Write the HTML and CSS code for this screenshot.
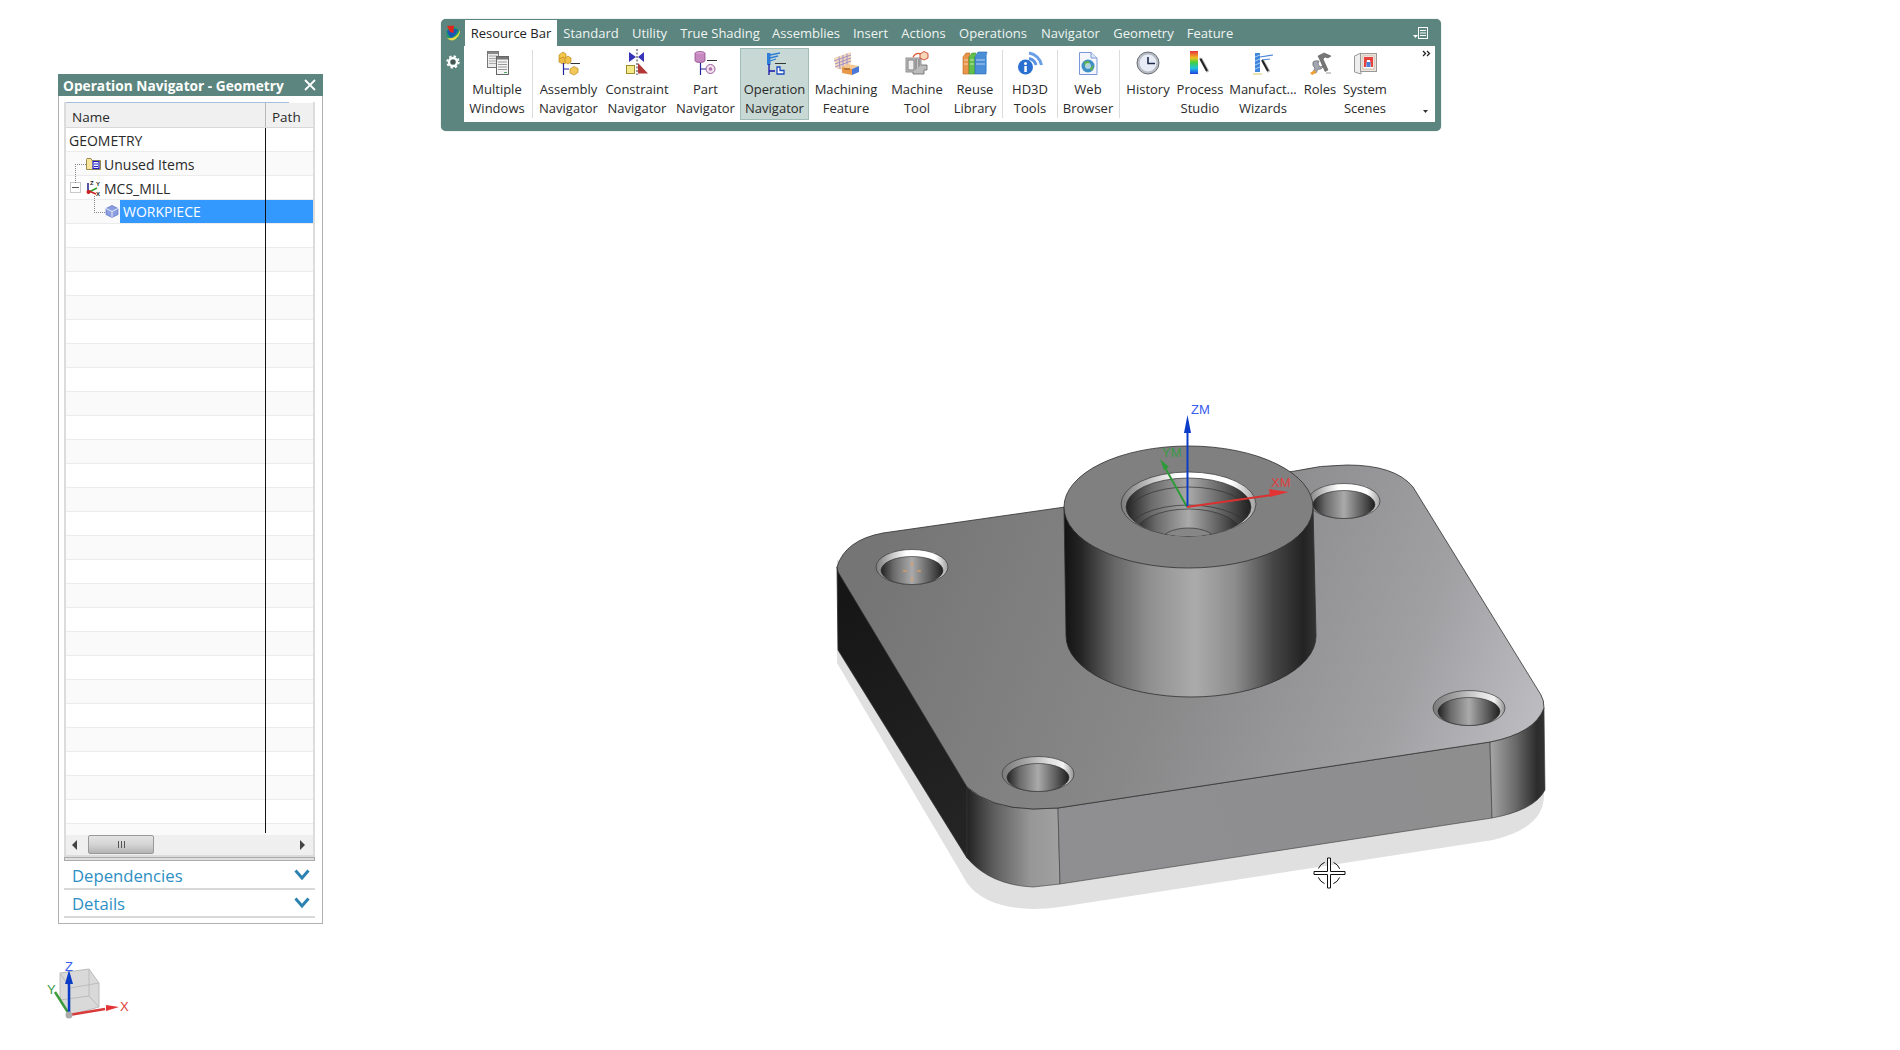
FILE: index.html
```html
<!DOCTYPE html>
<html lang="en">
<head>
<meta charset="utf-8">
<title>Operation Navigator</title>
<link rel="stylesheet" href="styles.css">
</head>
<body>
<main class="canvas">

<svg class="model" viewBox="820 390 760 540" width="760" height="540">
  <defs>
    <linearGradient id="topFace" gradientUnits="userSpaceOnUse" x1="900" y1="500" x2="1530" y2="730">
      <stop offset="0" stop-color="#757575"/><stop offset=".45" stop-color="#888889"/><stop offset=".8" stop-color="#a0a0a3"/><stop offset="1" stop-color="#bcbcc0"/>
    </linearGradient>
    <linearGradient id="frontFace" gradientUnits="userSpaceOnUse" x1="1060" y1="880" x2="1490" y2="745">
      <stop offset="0" stop-color="#8f8f92"/><stop offset="1" stop-color="#8e8e8f"/>
    </linearGradient>
    <linearGradient id="leftFace" gradientUnits="userSpaceOnUse" x1="840" y1="600" x2="960" y2="830">
      <stop offset="0" stop-color="#161616"/><stop offset="1" stop-color="#242424"/>
    </linearGradient>
    <linearGradient id="cornerFL" gradientUnits="userSpaceOnUse" x1="967" y1="0" x2="1058" y2="0">
      <stop offset="0" stop-color="#222"/><stop offset=".3" stop-color="#5e5e5e"/><stop offset=".7" stop-color="#979797"/><stop offset="1" stop-color="#a0a0a0"/>
    </linearGradient>
    <linearGradient id="cornerFR" gradientUnits="userSpaceOnUse" x1="1491" y1="0" x2="1545" y2="0">
      <stop offset="0" stop-color="#a4a4a4"/><stop offset=".45" stop-color="#6a6a6a"/><stop offset=".85" stop-color="#2c2c2c"/><stop offset="1" stop-color="#333"/>
    </linearGradient>
    <linearGradient id="bossWall" gradientUnits="userSpaceOnUse" x1="1064" y1="0" x2="1316" y2="0">
      <stop offset="0" stop-color="#121212"/><stop offset=".07" stop-color="#262626"/><stop offset=".2" stop-color="#666"/><stop offset=".34" stop-color="#909090"/><stop offset=".52" stop-color="#ababab"/><stop offset=".68" stop-color="#8c8c8c"/><stop offset=".83" stop-color="#464646"/><stop offset=".95" stop-color="#232323"/><stop offset="1" stop-color="#343434"/>
    </linearGradient>
    <linearGradient id="bore">
      <stop offset="0" stop-color="#222"/><stop offset=".2" stop-color="#6a6a6a"/><stop offset=".5" stop-color="#aaa"/><stop offset=".8" stop-color="#5a5a5a"/><stop offset="1" stop-color="#1e1e1e"/>
    </linearGradient>
    <linearGradient id="rim">
      <stop offset="0" stop-color="#7c7c7c"/><stop offset=".25" stop-color="#cfcfcf"/><stop offset=".42" stop-color="#fff"/><stop offset=".82" stop-color="#fff"/><stop offset="1" stop-color="#a0a0a0"/>
    </linearGradient>
    <linearGradient id="rimDull">
      <stop offset="0" stop-color="#7a7a7a"/><stop offset=".35" stop-color="#a8a8a8"/><stop offset=".65" stop-color="#dedede"/><stop offset=".85" stop-color="#f2f2f2"/><stop offset="1" stop-color="#909090"/>
    </linearGradient>
    <clipPath id="boreClip"><ellipse cx="1188.5" cy="507" rx="62.5" ry="29"/></clipPath>
    <g id="hole">
      <ellipse cx="0" cy="0" rx="36" ry="17.5" fill="url(#rim)" stroke="#3a3a3a" stroke-width=".7"/>
      <ellipse cx="0" cy="3.5" rx="31" ry="14" fill="url(#bore)" stroke="#2a2a2a" stroke-width=".6"/>
    </g>
    <g id="holeDull">
      <ellipse cx="0" cy="0" rx="36" ry="17.5" fill="url(#rimDull)" stroke="#3a3a3a" stroke-width=".7"/>
      <ellipse cx="0" cy="3.5" rx="31" ry="14" fill="url(#bore)" stroke="#2a2a2a" stroke-width=".6"/>
    </g>
  </defs>

  <path class="shadow" d="M837,560 L837,663 L967,883 Q985,908 1033,909 Q1047,909 1060,907 L1493,840 Q1544,828 1544,795 L1544,700 Z"/>
  <path class="edge" fill="url(#leftFace)" d="M837,567 L838,650 L967,858 L967,787 Z"/>
  <path class="edge-thin" fill="url(#cornerFL)" d="M967,787 Q990,808 1033,809 L1058,808 L1060,884 L1033,887 Q990,885 967,858 Z"/>
  <path class="edge-thin" fill="url(#frontFace)" d="M1058,808 L1490,742 L1492,818 L1060,884 Z"/>
  <path class="edge-thin" fill="url(#cornerFR)" d="M1490,742 Q1535,733 1544,708 L1545,790 Q1535,810 1492,818 Z"/>
  <path class="edge" fill="url(#topFace)" d="M1065,507 L883,533 Q845,540 837,567 L838,572 L967,787 Q990,808 1033,809 L1058,808 L1490,742 Q1535,733 1544,708 Q1544,700 1541,695 L1413,487 Q1395,465 1347,465 Q1320,465 1295,471 Z"/>

  <use href="#hole" x="912" y="567"/>
  <use href="#holeDull" x="1038" y="774"/>
  <use href="#hole" x="1344" y="501"/>
  <use href="#holeDull" x="1469" y="708"/>
  <path class="center-mark" d="M912,562V566M912,577V581M903,571H907M917,571H921"/>

  <path class="edge" fill="url(#bossWall)" d="M1064,507 L1066,636 A125,61 0 0 0 1316,636 L1313,507 Z"/>
  <ellipse class="edge" cx="1188.5" cy="507" rx="124.5" ry="61" fill="#808080"/>

  <ellipse cx="1188.5" cy="504" rx="67.5" ry="32" fill="url(#rim)" stroke="#333" stroke-width=".7"/>
  <ellipse cx="1188.5" cy="507" rx="62.5" ry="29" fill="url(#bore)" stroke="#333" stroke-width=".7"/>
  <g clip-path="url(#boreClip)">
    <ellipse class="bore-line" cx="1188.5" cy="515" rx="62" ry="28"/>
    <ellipse class="bore-line" cx="1188.5" cy="533" rx="62" ry="28"/>
    <ellipse cx="1188.5" cy="535" rx="54" ry="26" fill="url(#bore)" stroke="#333" stroke-width=".7"/>
    <ellipse cx="1188.5" cy="543" rx="29" ry="15" fill="#868686" stroke="#333" stroke-width=".7"/>
  </g>

  <g class="triad">
    <path class="axis-y" d="M1187,507 L1163,464"/>
    <path class="head-y" d="M1160,459 L1169,467 L1164,470 Z"/>
    <path class="axis-z" d="M1187.5,507 V432"/>
    <path class="head-z" d="M1187.5,415 L1191,433 H1184 Z"/>
    <path class="axis-x" d="M1187,507 L1272,495"/>
    <path class="head-x" d="M1289,492 L1269,489 L1270,497 Z"/>
    <text class="lbl lbl-z" x="1191" y="414">ZM</text>
    <text class="lbl lbl-y" x="1162" y="457">YM</text>
    <text class="lbl lbl-x" x="1271" y="487">XM</text>
  </g>

  <g class="cursor">
    <circle cx="1329" cy="873" r="11.5" fill="none" stroke="#111" stroke-width="1" stroke-dasharray="9 9" stroke-dashoffset="-4.5"/>
    <path d="M1314,871.5 H1327.5 V858 H1330.5 V871.5 H1345 V874.5 H1330.5 V888 H1327.5 V874.5 H1314 Z" fill="#fff" stroke="#111" stroke-width="1"/>
  </g>
</svg>

<svg class="triad-small" viewBox="40 960 100 70" width="100" height="70">
  <path d="M60,973 L89,969 L99,983 L99,1007 L70,1015 L60,1000 Z" fill="#d9d9d9" stroke="#bcbcbc"/>
  <path d="M60,973 L70,988 L99,983 M70,988 V1015 M60,1000 L89,996 L99,1007 M89,969 V996" fill="none" stroke="#bcbcbc"/>
  <path d="M69,1014 L55,992" stroke="#3c9c3c" stroke-width="2.5"/>
  <path d="M69,1015 L105,1009" stroke="#d83a3a" stroke-width="2.5"/>
  <path d="M119,1007 L106,1005 L106,1011 Z" fill="#e23434"/>
  <path d="M69,1012 V983" stroke="#0a3cc8" stroke-width="2.5"/>
  <path d="M69,970 L73,984 H65 Z" fill="#0a3cc8"/>
  <circle cx="69" cy="1015" r="3.5" fill="#aaa"/>
  <text class="lbl lbl-z" x="65" y="971">Z</text>
  <text class="lbl lbl-y" x="47" y="994">Y</text>
  <text class="lbl lbl-x" x="120" y="1011">X</text>
</svg>

<section class="ribbon">
  <aside class="rail">
    <svg class="logo" viewBox="0 0 16 16" width="16" height="16">
      <circle cx="8" cy="8.500" r="6.800" fill="#1f9a68"/>
      <path d="M2,6 Q8,2 13,5 Q11,10 6,13 Q3,10 2,6 Z" fill="#1a55b8"/>
      <path d="M2,1 L9,0.500 L8.500,8 L5,7 Z" fill="#e0261c"/>
      <path d="M2,13 Q11,15 15,5 Q15.500,12 8,15.500 Q4,15.500 2,13 Z" fill="#ecd84a"/>
    </svg>
    <svg class="gear" viewBox="0 0 14 14" width="14" height="14">
      <circle cx="7" cy="7" r="5.800" fill="none" stroke="#fff" stroke-width="1.800" stroke-dasharray="2.300 2.250"/>
      <circle cx="7" cy="7" r="4" fill="none" stroke="#fff" stroke-width="2.300"/>
      <circle cx="7" cy="7" r="2.300" fill="#48524f"/>
    </svg>
  </aside>
  <div class="ribbon-main">
    <nav class="tabs">
      <span class="tab active">Resource Bar</span>
      <span class="tab">Standard</span>
      <span class="tab">Utility</span>
      <span class="tab">True Shading</span>
      <span class="tab">Assemblies</span>
      <span class="tab">Insert</span>
      <span class="tab">Actions</span>
      <span class="tab">Operations</span>
      <span class="tab">Navigator</span>
      <span class="tab">Geometry</span>
      <span class="tab">Feature</span>
      <svg class="pin" viewBox="0 0 16 14" width="16" height="14">
        <path d="M0,9 H5 L2.500,12 Z" fill="#fff"/>
        <rect x="5.500" y="1.500" width="9" height="11" fill="#5b857e" stroke="#fff"/>
        <path d="M7,4.500H13M7,7H13M7,9.500H13" stroke="#fff"/>
      </svg>
    </nav>
    <div class="tools">
      <div class="tool">
        <svg class="ico" viewBox="0 0 28 28">
          <rect x="4.500" y="3.500" width="11" height="16" fill="#ececec" stroke="#777"/>
          <rect x="5" y="4" width="10" height="2" fill="#888"/>
          <path d="M6,8H14M6,10.500H14M6,13H14M6,15.500H14" stroke="#aaa"/>
          <rect x="13.500" y="8.500" width="12" height="18" fill="#f4f4f4" stroke="#666"/>
          <rect x="14" y="9" width="11" height="2.500" fill="#777"/>
          <path d="M15,14H24M15,16.500H24M15,19H24M15,21.500H24" stroke="#999"/>
          <path d="M21,24.500H24" stroke="#4aa860"/>
        </svg>
        <span class="label">Multiple<br>Windows</span>
      </div>
      <i class="sep"></i>
      <div class="tool">
        <svg class="ico" viewBox="0 0 28 28">
          <path d="M4,7 L8,4 L11,6 V11 L7,13 L4,11 Z" fill="#f4c64c" stroke="#b98a20" stroke-width=".7"/>
          <path d="M4,11 L8,9 L11,11 L11,15 L8,16 L4,14 Z" fill="#eebc44" stroke="#b98a20" stroke-width=".7"/>
          <path d="M10,10 L13,8 L16,10 V14 L13,16 L10,14 Z" fill="#f0c24c" stroke="#b98a20" stroke-width=".7"/>
          <path d="M15.500,15.500 H25" stroke="#333"/>
          <path d="M8.500,15 V27 M8.500,21 H14" stroke="#25259a" stroke-width="1.200"/>
          <path d="M15,21 L19,18.500 L23,20.500 V24.500 L19,27 L15,25 Z" fill="#f2c858" stroke="#b98a20" stroke-width=".7"/>
        </svg>
        <span class="label">Assembly<br>Navigator</span>
      </div>
      <div class="tool">
        <svg class="ico" viewBox="0 0 28 28">
          <path d="M6,4 L13,9 L6,14 Z M21,4 L15,9 L21,14 Z" fill="#3733b8"/>
          <path d="M14,1 V27" stroke="#333" stroke-dasharray="2 1.500"/>
          <rect x="3.500" y="17.500" width="8" height="8" fill="#f5ea8a" stroke="#a08c30"/>
          <path d="M15,15 L25,25.500 H15 Z" fill="#b23838"/>
        </svg>
        <span class="label">Constraint<br>Navigator</span>
      </div>
      <div class="tool">
        <svg class="ico" viewBox="0 0 28 28">
          <ellipse cx="8" cy="5.500" rx="5" ry="2" fill="#e0a8d8" stroke="#8a4a88" stroke-width=".8"/>
          <path d="M3,5.500 V12.500 A5,2 0 0 0 13,12.500 V5.500" fill="#c68ac0" stroke="#8a4a88" stroke-width=".8"/>
          <path d="M15,12.500 H25" stroke="#333"/>
          <path d="M8.500,15 V27 M8.500,21 H14" stroke="#25259a" stroke-width="1.200"/>
          <circle cx="18.500" cy="21" r="4.500" fill="#f2e2f0" stroke="#9a5a98"/>
          <circle cx="18.500" cy="21" r="1.800" fill="#b070a8"/>
        </svg>
        <span class="label">Part<br>Navigator</span>
      </div>
      <div class="tool current">
        <svg class="ico" viewBox="0 0 28 28">
          <rect x="6" y="5" width="3.500" height="12" fill="#2f7fd8"/>
          <path d="M9,7 L19,5 M9,10 L17,8 M9,13 L15,11" stroke="#2f7fd8" stroke-width="1.300"/>
          <path d="M14,15.500 H25" stroke="#333"/>
          <path d="M8,16 V27 M8,23 H14" stroke="#1515a8" stroke-width="1.300"/>
          <path d="M16,19 H19 V22.500 H23 V26 H16 Z" fill="#fff" stroke="#1a4ac0" stroke-width="1.300"/>
        </svg>
        <span class="label">Operation<br>Navigator</span>
      </div>
      <div class="tool">
        <svg class="ico" viewBox="0 0 28 28">
          <path d="M2,10 L19,4 V15 L10,22 L4,20 Z" fill="#f4d8b8"/>
          <path d="M2,13 L19,7 M3,16 L19,10 M3,19 L19,13 M7,8.500 L8,21 M11,7 L11,19 M15,5.500 L15,17" stroke="#9a8ac8" stroke-width=".9" fill="none"/>
          <path d="M10,19 L16,16 L27,18 L20,21 Z" fill="#f4c890"/>
          <path d="M10,19 L20,21 V27 L10,25 Z" fill="#e89848"/>
          <path d="M20,21 L27,18 V24 L20,27 Z" fill="#4a78d8"/>
          <path d="M12,21 H18" stroke="#a86828" stroke-width="1.500"/>
        </svg>
        <span class="label">Machining<br>Feature</span>
      </div>
      <div class="tool">
        <svg class="ico" viewBox="0 0 28 28">
          <rect x="3" y="10" width="15" height="14" fill="#c8c8c8" stroke="#777" stroke-width=".8"/>
          <rect x="5" y="12" width="6" height="10" fill="#eee" stroke="#666" stroke-width=".8"/>
          <path d="M13,11 V22 M16,11 V22" stroke="#666"/>
          <path d="M18,17 H24 V22 L21,22 L21,26 H10 V24" fill="#bbb" stroke="#666" stroke-width=".8"/>
          <path d="M10,9 Q13,4 18,6" fill="none" stroke="#e05830" stroke-width="1.300"/>
          <path d="M17,6 L21,3.500 L25,5.500 V10 L21,12 L17,10 Z" fill="#f5d8b8" stroke="#d0402a" stroke-width=".9"/>
        </svg>
        <span class="label">Machine<br>Tool</span>
      </div>
      <div class="tool">
        <svg class="ico" viewBox="0 0 28 28">
          <path d="M2,9 L5,5 H9 L8,9 V26 H2 Z" fill="#e8944a" stroke="#b86a20" stroke-width=".6"/>
          <path d="M8,9 L11,5 H15 L14,9 V26 H8 Z" fill="#62c04a" stroke="#3e9030" stroke-width=".6"/>
          <path d="M14,9 L17,4 H26 L25,9 V26 L20,26 H14 Z" fill="#4a8ed8" stroke="#2a68b0" stroke-width=".6"/>
          <path d="M25,9 L26,4 V22 L25,26 Z" fill="#8abcec"/>
          <path d="M3,12H7M9,12H13M15,12H24M15,16H24M9,16H13M3,16H7" stroke="#fff" stroke-opacity=".6"/>
        </svg>
        <span class="label">Reuse<br>Library</span>
      </div>
      <i class="sep"></i>
      <div class="tool">
        <svg class="ico" viewBox="0 0 28 28">
          <path d="M13,10.500 A9,9 0 0 1 20,17" fill="none" stroke="#5a92e4" stroke-width="2.800"/>
          <path d="M13,5 A15,15 0 0 1 25.500,17" fill="none" stroke="#6a9ee6" stroke-width="3"/>
          <circle cx="9.500" cy="19" r="7.500" fill="#2a70d0"/>
          <circle cx="9.500" cy="15.500" r="1.500" fill="#fff"/>
          <rect x="8.300" y="18" width="2.500" height="6" fill="#fff"/>
        </svg>
        <span class="label">HD3D<br>Tools</span>
      </div>
      <i class="sep"></i>
      <div class="tool">
        <svg class="ico" viewBox="0 0 28 28">
          <path d="M5.500,4.500 H17 L23,10 V26.500 H5.500 Z" fill="#f4f6fb" stroke="#7a98d8"/>
          <path d="M17,4.500 V10 H23" fill="#dfe6f6" stroke="#7a98d8"/>
          <circle cx="14" cy="18" r="6.500" fill="#3e8fc8"/>
          <path d="M10,14 Q13,12 16,14 L14,18 L11,19 Z M15,20 L20,17 L18,23 Z" fill="#5cae50"/>
          <circle cx="14" cy="18" r="3" fill="#d8ecf4" opacity=".7"/>
        </svg>
        <span class="label">Web<br>Browser</span>
      </div>
      <i class="sep"></i>
      <div class="tool">
        <svg class="ico" viewBox="0 0 28 28">
          <circle cx="14" cy="15" r="11" fill="#b8bcc4" stroke="#6a6e78"/>
          <circle cx="14" cy="15" r="8.500" fill="#e8ecf6"/>
          <path d="M14,9 V15.500 H21" fill="none" stroke="#1c2a4a" stroke-width="1.600"/>
        </svg>
        <span class="label">History</span>
      </div>
      <div class="tool">
        <svg class="ico" viewBox="0 0 28 28">
          <defs>
            <linearGradient id="spectrum" x1="0" y1="0" x2="0" y2="1">
              <stop offset="0" stop-color="#e8303a"/><stop offset=".3" stop-color="#f0c020"/><stop offset=".5" stop-color="#40d040"/><stop offset=".75" stop-color="#20c0e0"/><stop offset="1" stop-color="#2040e0"/>
            </linearGradient>
          </defs>
          <rect x="4" y="3" width="8" height="23" fill="url(#spectrum)"/>
          <path d="M15,11 L22,24" stroke="#bbb" stroke-width="3"/>
          <path d="M14,10 L21,23" stroke="#222" stroke-width="2"/>
          <path d="M13,8.500 L14.500,10.500" stroke="#eee" stroke-width="2"/>
        </svg>
        <span class="label">Process<br>Studio</span>
      </div>
      <div class="tool">
        <svg class="ico" viewBox="0 0 28 28">
          <rect x="6" y="5" width="5" height="19" fill="#3f86dc"/>
          <path d="M6,9 L11,7 M6,13 L11,11 M6,17 L11,15 M6,21 L11,19" stroke="#a8ccf0"/>
          <path d="M11,9 L24,7 M13,12 L21,11" stroke="#4a80d8" stroke-width="1.200"/>
          <path d="M14,13 L20,24" stroke="#bbb" stroke-width="3"/>
          <path d="M13,12 L19,23" stroke="#222" stroke-width="2"/>
          <path d="M4,26 H13" stroke="#e0d080" stroke-width="1.200"/>
        </svg>
        <span class="label">Manufact...<br>Wizards</span>
      </div>
      <div class="tool">
        <svg class="ico" viewBox="0 0 28 28">
          <path d="M12,8 L18,5 L25,8 L22,10 L19,9 L17,11 L22,22 L19,23.500 L14,12 Z" fill="#777" stroke="#444" stroke-width=".5"/>
          <path d="M7,14 Q6,18 9,20 L7,24 L10,25 L12,21 Q16,22 17,18 L14,19 L12,16 L13,13 Q9,12 7,14 Z" fill="#a2a6b0" stroke="#555" stroke-width=".6"/>
          <path d="M4,25 L9,22 L10,25 L6,27 Z" fill="#f0a030"/>
          <path d="M20,25 H25" stroke="#ccc" stroke-width="2"/>
        </svg>
        <span class="label">Roles</span>
      </div>
      <div class="tool">
        <svg class="ico" viewBox="0 0 28 28">
          <path d="M3.500,8 L10,5 V26 L3.500,24 Z" fill="#eee" stroke="#999"/>
          <rect x="9.500" y="5.500" width="16" height="18" fill="#e8e2da" stroke="#999"/>
          <rect x="12" y="8" width="11" height="13" fill="#fff" stroke="#c0a090" stroke-width=".6"/>
          <rect x="13" y="9" width="9" height="3" fill="#e8403a"/>
          <path d="M13,12 H16 L15,19 H13 Z M22,12 H19 L20,19 H22 Z" fill="#e8403a"/>
          <rect x="15.500" y="14" width="4" height="5" fill="#4a7ed8"/>
        </svg>
        <span class="label">System<br>Scenes</span>
      </div>
      <div class="overflow">
        <svg viewBox="0 0 9 7" width="9" height="7"><path d="M1,1 L3.500,3.500 L1,6 M5,1 L7.500,3.500 L5,6" fill="none" stroke="#222" stroke-width="1.300"/></svg>
        <svg class="more" viewBox="0 0 7 4" width="7" height="4"><path d="M1,0 H6 L3.500,3 Z" fill="#333"/></svg>
      </div>
    </div>
  </div>
</section>

<section class="navigator">
  <header class="nav-head">
    <span>Operation Navigator - Geometry</span>
    <svg viewBox="0 0 12 12" width="12" height="12"><path d="M1,1 L11,11 M11,1 L1,11" stroke="#fff" stroke-width="1.800"/></svg>
  </header>
  <div class="nav-body">
    <div class="list">
      <div class="strip"></div>
      <div class="list-head"><span class="col-name">Name</span><span class="col-path">Path</span></div>
      <div class="rows">
        <div class="col-line"></div>
        <div class="row plain">GEOMETRY</div>
        <div class="row branch">
          <i class="link link-a"></i>
          <svg class="tree-ico" viewBox="0 0 15 13"><path d="M.5,2.500 V12.500 H14.500 V3.500 H6 L5,1.500 H1 Z" fill="#f8e49a" stroke="#9a8a50"/><rect x="7" y="4.500" width="6" height="7" fill="#fff" stroke="#1a1ac8" stroke-width="1.200"/><path d="M8,7H12M8,9.500H12" stroke="#1a1ac8"/></svg>
          <span>Unused Items</span>
        </div>
        <div class="row mcs">
          <i class="expander"></i>
          <svg class="tree-ico tall" viewBox="0 0 15 16"><path d="M2,3 V11" stroke="#1a1a8a" stroke-width="1.500"/><path d="M3,12 L11,8" stroke="#2aa02a" stroke-width="1.500"/><path d="M3,11 L10,14" stroke="#c82020" stroke-width="1.500"/><circle cx="2.500" cy="12" r="2" fill="#c82020"/><text class="micro" x="4" y="5">Z</text><text class="micro" x="10" y="6">Y</text><text class="micro" x="10" y="16">X</text></svg>
          <span>MCS_MILL</span>
        </div>
        <div class="row leaf">
          <i class="link link-b"></i>
          <svg class="tree-ico cube" viewBox="0 0 14 13"><path d="M1,3.500 L7,.5 L13,3.500 V9.500 L7,12.500 L1,9.500 Z" fill="#8a9ee0" stroke="#5a70c0" stroke-width=".7"/><path d="M1,3.500 L7,6.500 L13,3.500 M7,6.500 V12.500" fill="none" stroke="#e8ecfa"/></svg>
          <span class="selected">WORKPIECE</span>
        </div>
        <div class="row"></div><div class="row"></div><div class="row"></div><div class="row"></div><div class="row"></div>
        <div class="row"></div><div class="row"></div><div class="row"></div><div class="row"></div><div class="row"></div>
        <div class="row"></div><div class="row"></div><div class="row"></div><div class="row"></div><div class="row"></div>
        <div class="row"></div><div class="row"></div><div class="row"></div><div class="row"></div><div class="row"></div>
        <div class="row"></div><div class="row"></div><div class="row"></div><div class="row"></div><div class="row"></div>
        <div class="row"></div>
      </div>
      <div class="hscroll">
        <svg class="arrow" viewBox="0 0 6 10" width="6" height="10"><path d="M5,0 V10 L0,5 Z" fill="#444"/></svg>
        <div class="thumb"><i></i><i></i><i></i></div>
        <svg class="arrow" viewBox="0 0 6 10" width="6" height="10"><path d="M1,0 V10 L6,5 Z" fill="#444"/></svg>
      </div>
    </div>
    <div class="split"></div>
    <div class="fold"><span>Dependencies</span><svg viewBox="0 0 16 12" width="16" height="12"><path d="M1.500,1.500 L8,9 L14.500,1.500" fill="none" stroke="#2c82b0" stroke-width="3"/></svg></div>
    <div class="fold"><span>Details</span><svg viewBox="0 0 16 12" width="16" height="12"><path d="M1.500,1.500 L8,9 L14.500,1.500" fill="none" stroke="#2c82b0" stroke-width="3"/></svg></div>
  </div>
</section>

</main>
</body>
</html>
```

FILE: styles.css
```css
* { box-sizing: border-box; }
html, body { margin: 0; height: 100%; background: #fff; }
body { overflow: hidden; font-family: "Open Sans", "Noto Sans", "Liberation Sans", sans-serif; font-size: 13px; color: #2a2a2a; }
.canvas { position: relative; width: 1900px; height: 1050px; }

/* 3D part on the free canvas */
.model { position: absolute; left: 820px; top: 390px; }
.shadow { fill: #e0e0e0; }
.edge { stroke: #2e2e2e; stroke-width: .8; }
.edge-thin { stroke: #3a3a3a; stroke-width: .6; }
.bore-line { fill: none; stroke: #333; stroke-width: .7; }
.center-mark { fill: none; stroke: #f0a050; stroke-width: 1; }
.axis-z { stroke: #0a3cc8; stroke-width: 2; }
.head-z { fill: #0a3cc8; }
.axis-y { stroke: #2f9a38; stroke-width: 2; }
.head-y { fill: #2f9a38; }
.axis-x { stroke: #d93030; stroke-width: 2; }
.head-x { fill: #e23434; }
.lbl { font-family: "Liberation Sans", sans-serif; font-size: 13px; }
.lbl-z { fill: #3a5cf0; }
.lbl-y { fill: #3a9a48; }
.lbl-x { fill: #e04040; }
.triad-small { position: absolute; left: 40px; top: 960px; }
.micro { font-family: "Liberation Sans", sans-serif; font-size: 6px; font-weight: bold; fill: #222; }

/* ribbon window */
.ribbon { position: absolute; left: 441px; top: 19px; width: 1000px; height: 112px; display: flex; background: #5b857e; border-radius: 5px; box-shadow: 0 0 1px #5b857e; }
.rail { width: 23px; display: flex; flex-direction: column; align-items: center; padding-top: 6px; gap: 14px; }
.ribbon-main { flex: 1; margin-right: 6px; display: flex; flex-direction: column; }
.tabs { height: 27px; display: grid; grid-template-columns: 92px 68px 49px 92px 80px 49px 57px 82px 73px 73px 60px 1fr; margin-left: 1px; align-items: stretch; }
.tab { display: flex; align-items: center; justify-content: center; color: #f0f4f3; margin-top: 1px; white-space: nowrap; padding-bottom: 1px; }
.tab.active { background: #fff; color: #222; }
.pin { justify-self: end; align-self: center; margin-right: 6px; }
.tools { height: 76px; background: #fff; padding-top: 2px; display: grid; grid-template-columns: 66px 4px 69px 68px 69px 69px 74px 68px 48px 6px 50px 4px 58px 4px 54px 50px 76px 38px 52px 1fr; }
.tool { height: 72px; display: flex; flex-direction: column; align-items: center; border: 1px solid transparent; }
.tool.current { background: #c8d8d4; border-color: #9fbdb6; }
.ico { width: 28px; height: 28px; flex: none; margin-top: -1px; }
.label { margin-top: 4px; line-height: 19px; text-align: center; white-space: nowrap; }
.sep { width: 1px; height: 68px; margin: 2px auto 0; background: #dcdcdc; }
.overflow { height: 72px; display: flex; flex-direction: column; align-items: flex-end; justify-content: space-between; padding: 2px 4px 6px 0; }
.more { margin-right: 2px; }

/* navigator window */
.navigator { position: absolute; left: 58px; top: 74px; width: 265px; height: 850px; border: 1px solid #b0b0b0; border-top: 0; background: #fff; }
.nav-head { height: 22px; margin: 0 -1px; background: #5b857e; color: #fff; font-weight: 700; font-size: 13.700px; display: flex; align-items: center; justify-content: space-between; padding: 0 7px 0 5px; white-space: nowrap; }
.nav-body { padding: 6px 7px 0 5px; }
.list { border: 2px solid #dcdcdc; border-top: 0; width: 251px; }
.strip { height: 1px; background: #a8bfdc; margin-right: 24px; }
.list-head { height: 25px; display: flex; background: #f0f0f0; border-bottom: 1px solid #d8d8d8; font-size: 13.500px; align-items: center; }
.col-name { width: 200px; padding-left: 6px; padding-top: 3px; border-right: 1px solid #b8b8b8; height: 100%; display: flex; align-items: center; }
.col-path { padding-left: 6px; padding-top: 3px; }
.rows { position: relative; height: 707px; overflow: hidden; font-size: 14px; }
.col-line { position: absolute; z-index: 2; left: 199px; top: 0; bottom: 2px; width: 1px; background: #111; }
.row { position: relative; height: 24px; border-bottom: 1px solid #ececec; display: flex; align-items: center; }
.row span { padding-top: 1px; }
.row:nth-child(odd) { background: #fafafa; }
.row.plain { padding-left: 3px; padding-top: 1px; }
.row.branch { padding-left: 20px; }
.row.mcs { padding-left: 4px; overflow: visible; }
.row.leaf { padding-left: 39px; }
.tree-ico { width: 15px; height: 13px; margin-right: 3px; flex: none; }
.tree-ico.tall { height: 16px; }
.tree-ico.cube { width: 14px; margin-right: 1px; }
.expander { width: 11px; height: 11px; margin-right: 5px; background: linear-gradient(#555, #555) center / 7px 1px no-repeat #fff; border: 1px solid #c8c8c8; flex: none; }
.link { position: absolute; border: 0 dotted #888; z-index: 1; }
.link-a { left: 9px; top: 12px; width: 11px; height: 19px; border-width: 1px 0 0 1px; }
.link-b { left: 28px; top: -4px; width: 11px; height: 17px; border-width: 0 0 1px 1px; }
.selected { flex: 1; height: 23px; line-height: 22px; background: #3399ff; color: #fff; padding-left: 3px; }
.hscroll { height: 20px; background: #efefef; display: flex; align-items: center; padding-right: 8px; }
.arrow { flex: none; }
.hscroll .arrow:first-child { margin: 0 10px 0 6px; }
.hscroll .arrow:last-child { margin-left: auto; }
.thumb { width: 66px; height: 19px; margin-top: -1px; border: 1px solid #999; border-radius: 2px; background: linear-gradient(#e4e4e4, #d4d4d4 50%, #b4b4b4); display: flex; justify-content: center; align-items: center; gap: 2px; }
.thumb i { width: 1px; height: 7px; background: #555; }
.split { width: 251px; height: 4px; border: 1px solid #aaa; background: #e0e0e0; }
.fold { width: 251px; height: 28px; border-bottom: 2px solid #d8d8d8; display: flex; align-items: center; justify-content: space-between; padding: 0 5px 0 8px; color: #2d8fc4; font-size: 16.700px; }
.fold span { padding-top: 1px; }
.split + .fold { height: 29px; }
```
